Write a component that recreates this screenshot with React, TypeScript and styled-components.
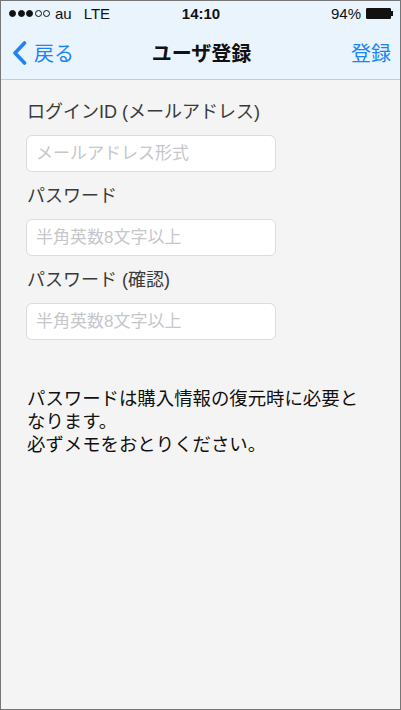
import React from "react";
import styled, { createGlobalStyle } from "styled-components";

const Global = createGlobalStyle`
  html, body { margin: 0; padding: 0; background: #f4f4f4; }
  * { box-sizing: border-box; }
  body { font-family: "Liberation Sans", "Noto Sans CJK JP", sans-serif; }
`;

const Frame = styled.div`
  width: 401px;
  height: 710px;
  border: 1px solid #767676;
  background: #f4f4f4;
  display: flex;
  flex-direction: column;
  overflow: hidden;
`;

const Header = styled.header`
  background: #e9f4fc;
  border-bottom: 1px solid #c9cbcd;
`;

const StatusBar = styled.div`
  height: 25px;
  display: grid;
  grid-template-columns: 1fr auto 1fr;
  align-items: center;
  padding: 0 7px 0 8px;
  font-size: 15px;
  color: #111;
`;

const StatusLeft = styled.div`
  display: flex;
  align-items: center;
  gap: 5px;
`;

const Signal = styled.div`
  display: flex;
  gap: 1.5px;
  align-items: center;
`;

const Dot = styled.span<{ $on: boolean }>`
  width: 7px;
  height: 7px;
  border-radius: 50%;
  border: 1px solid #111;
  background: ${(p) => (p.$on ? "#111" : "transparent")};
`;

const Carrier = styled.span`
  margin-right: 7px;
`;

const Time = styled.div`
  font-weight: bold;
  font-size: 15px;
`;

const StatusRight = styled.div`
  display: flex;
  justify-content: flex-end;
  align-items: center;
  gap: 5px;
`;

const Battery = styled.div`
  display: flex;
  align-items: center;
`;

const BatteryBody = styled.div`
  width: 25px;
  height: 11px;
  border: 1px solid #111;
  background: #111;
  border-radius: 1px;
`;

const BatteryTip = styled.div`
  width: 2px;
  height: 5px;
  background: #111;
`;

const NavBar = styled.nav`
  height: 53px;
  display: grid;
  grid-template-columns: 1fr auto 1fr;
  align-items: center;
  padding: 0 9px 0 11px;
`;

const BackButton = styled.div`
  display: flex;
  align-items: center;
  gap: 7px;
  color: #1e84f5;
  font-size: 20px;
`;

const Title = styled.div`
  font-size: 20px;
  font-weight: bold;
  color: #111;
`;

const RightButton = styled.div`
  justify-self: end;
  color: #1e84f5;
  font-size: 20px;
`;

const Content = styled.main`
  padding: 22px 25px 0 25px;
  display: flex;
  flex-direction: column;
`;

const Field = styled.div`
  display: flex;
  flex-direction: column;
  gap: 13px;
  margin-bottom: 14px;
`;

const Label = styled.label`
  font-size: 18px;
  line-height: 20px;
  color: #3a3a3a;
  padding-left: 1px;
`;

const Input = styled.input`
  width: 250px;
  height: 37px;
  border: 1px solid #dcdcdc;
  border-radius: 6px;
  background: #fff;
  padding: 0 9px;
  font-family: inherit;
  font-size: 17px;
  color: #111;
  outline: none;
  &::placeholder {
    color: #c6c6cb;
  }
`;

const Note = styled.p`
  margin: 33px 0 0 1px;
  font-size: 18.4px;
  line-height: 23px;
  color: #111;
`;

const Chevron = () => (
  <svg width="15" height="24" viewBox="0 0 15 24">
    <path d="M12.5 2 L3 12 L12.5 22" fill="none" stroke="#1e84f5" strokeWidth="3.6" strokeLinecap="round" strokeLinejoin="round" />
  </svg>
);

export default function App() {
  return (
    <>
      <Global />
      <Frame>
        <Header>
          <StatusBar>
            <StatusLeft>
              <Signal>
                {[true, true, true, false, false].map((on, i) => (
                  <Dot key={i} $on={on} />
                ))}
              </Signal>
              <Carrier>au</Carrier>
              <span>LTE</span>
            </StatusLeft>
            <Time>14:10</Time>
            <StatusRight>
              <span>94%</span>
              <Battery>
                <BatteryBody />
                <BatteryTip />
              </Battery>
            </StatusRight>
          </StatusBar>
          <NavBar>
            <BackButton>
              <Chevron />
              <span>戻る</span>
            </BackButton>
            <Title>ユーザ登録</Title>
            <RightButton>登録</RightButton>
          </NavBar>
        </Header>
        <Content>
          <Field>
            <Label>ログインID (メールアドレス)</Label>
            <Input type="email" placeholder="メールアドレス形式" />
          </Field>
          <Field>
            <Label>パスワード</Label>
            <Input type="password" placeholder="半角英数8文字以上" />
          </Field>
          <Field>
            <Label>パスワード (確認)</Label>
            <Input type="password" placeholder="半角英数8文字以上" />
          </Field>
          <Note>
            パスワードは購入情報の復元時に必要と
            <br />
            なります。
            <br />
            必ずメモをおとりください。
          </Note>
        </Content>
      </Frame>
    </>
  );
}
